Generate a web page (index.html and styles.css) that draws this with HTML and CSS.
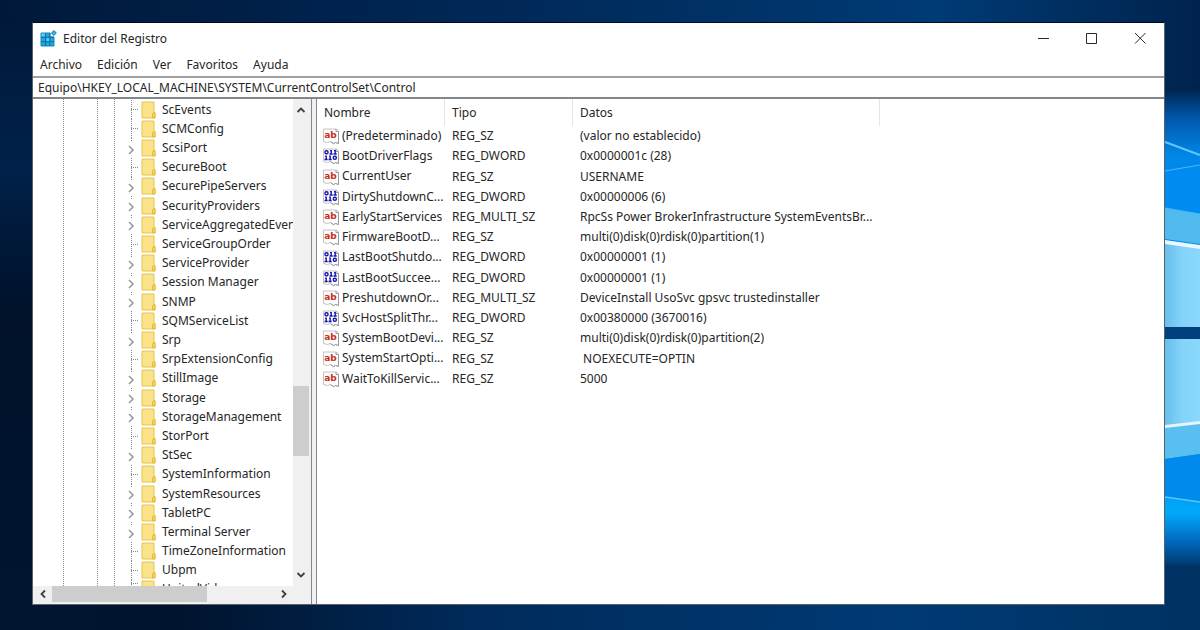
FILE: index.html
```html
<!DOCTYPE html>
<html lang="es">
<head>
<meta charset="utf-8">
<title>Editor del Registro</title>
<link rel="stylesheet" href="styles.css">
</head>
<body>
<svg class="wallpaper" viewBox="0 0 1200 630" preserveAspectRatio="xMaxYMid slice" aria-hidden="true">
  <defs>
    <linearGradient id="sky" x1="0" x2="1" y1="0" y2="0">
      <stop offset="0" stop-color="#00193a"/><stop offset=".2" stop-color="#001f47"/><stop offset=".5" stop-color="#002c5e"/><stop offset=".78" stop-color="#003b75"/><stop offset="1" stop-color="#00234d"/>
    </linearGradient>
    <linearGradient id="floor" x1="0" x2="1" y1="0" y2="0">
      <stop offset="0" stop-color="#00152f"/><stop offset=".15" stop-color="#00142e"/><stop offset=".4" stop-color="#002b5c"/><stop offset=".75" stop-color="#003a74"/><stop offset="1" stop-color="#003263"/>
    </linearGradient>
    <linearGradient id="beam" x1="0" x2="0" y1="0" y2="1">
      <stop offset="0" stop-color="#002652"/><stop offset=".06" stop-color="#0058ac"/><stop offset=".14" stop-color="#0088e8"/><stop offset=".8" stop-color="#008fee"/><stop offset=".89" stop-color="#00a9fa"/><stop offset=".95" stop-color="#0069bf"/><stop offset="1" stop-color="#00396f"/>
    </linearGradient>
    <linearGradient id="pane" x1="0" x2="1" y1="0" y2="0">
      <stop offset="0" stop-color="#66bfeb"/><stop offset=".5" stop-color="#84d3fa"/><stop offset="1" stop-color="#8bd8fc"/>
    </linearGradient>
    <linearGradient id="edge" x1="0" x2="0" y1="0" y2="1">
      <stop offset="0" stop-color="#00193a"/><stop offset=".25" stop-color="#00214a"/><stop offset=".5" stop-color="#001129"/><stop offset="1" stop-color="#00152f"/>
    </linearGradient>
  </defs>
  <rect width="1200" height="630" fill="url(#sky)"/>
  <rect y="560" width="1200" height="70" fill="url(#floor)"/>
  <rect y="22" width="32" height="583" fill="url(#edge)"/>
  <rect x="1165" y="90" width="35" height="475" fill="url(#beam)"/>
  <path d="M1165 169l35-4v50l-35-6z" fill="#008bf0"/>
  <path d="M1165 208l35 6v30l-35-5z" fill="#50b9ed"/>
  <path d="M1165 241l35 5v81h-35z" fill="url(#pane)"/>
  <path d="M1165 142l35 13" stroke="#65c5ff" stroke-width="2"/>
  <path d="M1165 171l35-6M1165 208l35 6" stroke="#49b8f3" stroke-width="1"/>
  <path d="M1165 240l35 5v4l-35-5z" fill="#e9f6ff"/>
  <path d="M1165 327h35v12h-35z" fill="#00407f"/>
  <path d="M1165 339h35v83l-35 5z" fill="url(#pane)"/>
  <path d="M1165 427l35-5v32l-35 5z" fill="#58bff0"/>
  <path d="M1165 459l35-5v48l-35-5z" fill="#008bec"/>
  <path d="M1165 425l35-4v3l-35 4z" fill="#e4f5ff"/>
  <path d="M1165 497l35 5" stroke="#54c8fd" stroke-width="1.500"/>
</svg>

<svg class="symbols" aria-hidden="true">
  <symbol id="folder" viewBox="0 0 15 18">
    <path d="M1 1h12v11h1v5H1z" fill="#fbe38a" stroke="#e6c34f"/>
    <path d="M11.500 17v-4l1-1.500h1.500V17z" fill="#f8d568" stroke="#e5b93c"/>
  </symbol>
  <symbol id="chevron" viewBox="0 0 8 10"><path d="M2 1l4 4-4 4" fill="none" stroke="#9b9b9b" stroke-width="1.600"/></symbol>
  <symbol id="arrow" viewBox="0 0 10 10"><path d="M1.500 7L5 3.500 8.500 7" fill="none" stroke="#404040" stroke-width="1.800"/></symbol>
  <symbol id="sheet" viewBox="0 0 18 17">
    <path d="M1.500 1h13l2 2v12.500l-3-1-2 1-3-2-3 1-4-1z" fill="#fdfdfd" stroke="#c4c4c4"/>
    <path d="M14 1v2.500h2.500M16.500 4v11.500l-3-1-2 1.200-3-2" fill="none" stroke="#999"/>
  </symbol>
  <symbol id="string" viewBox="0 0 18 17">
    <use href="#sheet"/>
    <text x="8.500" y="10" text-anchor="middle" class="glyph-string">ab</text>
  </symbol>
  <symbol id="binary" viewBox="0 0 18 17">
    <use href="#sheet"/>
    <g fill="none" stroke="#1717b0" stroke-width="1.400">
      <rect x="3" y="2.700" width="3" height="3" rx="1.300"/><path d="M8 2.600h1.200v3.400M7.500 6h3.200M12 2.600h1.200v3.400M11.500 6h3.200"/>
      <path d="M3 8.100h1.200v3.400M2.500 11.500h3.200M7 8.100h1.200v3.400M6.500 11.500h3.200"/><rect x="11.300" y="8.200" width="3" height="3" rx="1.300"/>
    </g>
  </symbol>
</svg>

<main class="window">
  <header class="titlebar">
    <svg class="app-icon" viewBox="0 0 17 17" aria-hidden="true">
      <path d="M1 3h9v4h4v9H1z" fill="#20a8dc" stroke="#1386bd"/>
      <path d="M1.500 3.500h4v3h-4zM6.500 8h3v3h-3z" fill="#56cdf3"/>
      <path d="M5.500 3v13M9.800 3v13M1 7.300h13M1 11.700h13" stroke="#0b6fa5"/>
      <path d="M13.700.6l2.600 2.200-2.300 2.600-2.600-2.200z" fill="#35b9e6" stroke="#1480b5"/>
    </svg>
    <h1 class="title">Editor del Registro</h1>
    <div class="controls">
      <button class="control" type="button" aria-label="Minimizar"><svg viewBox="0 0 12 12"><path d="M0 5.500h11"/></svg></button>
      <button class="control" type="button" aria-label="Maximizar"><svg viewBox="0 0 12 12"><path d="M.5.500h10v10h-10z"/></svg></button>
      <button class="control" type="button" aria-label="Cerrar"><svg viewBox="0 0 12 12"><path d="M1 0l10.500 10.500M11.500 0L1 10.500"/></svg></button>
    </div>
  </header>
  <nav class="menubar">
    <button type="button">Archivo</button><button type="button">Edición</button><button type="button">Ver</button><button type="button">Favoritos</button><button type="button">Ayuda</button>
  </nav>
  <input class="address" type="text" aria-label="Ruta de la clave" value="Equipo\HKEY_LOCAL_MACHINE\SYSTEM\CurrentControlSet\Control">
  <div class="panes">
    <section class="tree-pane" aria-label="Claves">
      <ul class="tree">
        <li><span class="branch"></span><svg class="folder"><use href="#folder"/></svg>ScEvents</li>
        <li><span class="branch"></span><svg class="folder"><use href="#folder"/></svg>SCMConfig</li>
        <li><button class="toggle" type="button" aria-label="Expandir ScsiPort"><svg><use href="#chevron"/></svg></button><svg class="folder"><use href="#folder"/></svg>ScsiPort</li>
        <li><span class="branch"></span><svg class="folder"><use href="#folder"/></svg>SecureBoot</li>
        <li><button class="toggle" type="button" aria-label="Expandir SecurePipeServers"><svg><use href="#chevron"/></svg></button><svg class="folder"><use href="#folder"/></svg>SecurePipeServers</li>
        <li><button class="toggle" type="button" aria-label="Expandir SecurityProviders"><svg><use href="#chevron"/></svg></button><svg class="folder"><use href="#folder"/></svg>SecurityProviders</li>
        <li><button class="toggle" type="button" aria-label="Expandir ServiceAggregatedEvents"><svg><use href="#chevron"/></svg></button><svg class="folder"><use href="#folder"/></svg>ServiceAggregatedEvents</li>
        <li><span class="branch"></span><svg class="folder"><use href="#folder"/></svg>ServiceGroupOrder</li>
        <li><button class="toggle" type="button" aria-label="Expandir ServiceProvider"><svg><use href="#chevron"/></svg></button><svg class="folder"><use href="#folder"/></svg>ServiceProvider</li>
        <li><button class="toggle" type="button" aria-label="Expandir Session Manager"><svg><use href="#chevron"/></svg></button><svg class="folder"><use href="#folder"/></svg>Session Manager</li>
        <li><button class="toggle" type="button" aria-label="Expandir SNMP"><svg><use href="#chevron"/></svg></button><svg class="folder"><use href="#folder"/></svg>SNMP</li>
        <li><span class="branch"></span><svg class="folder"><use href="#folder"/></svg>SQMServiceList</li>
        <li><button class="toggle" type="button" aria-label="Expandir Srp"><svg><use href="#chevron"/></svg></button><svg class="folder"><use href="#folder"/></svg>Srp</li>
        <li><span class="branch"></span><svg class="folder"><use href="#folder"/></svg>SrpExtensionConfig</li>
        <li><button class="toggle" type="button" aria-label="Expandir StillImage"><svg><use href="#chevron"/></svg></button><svg class="folder"><use href="#folder"/></svg>StillImage</li>
        <li><button class="toggle" type="button" aria-label="Expandir Storage"><svg><use href="#chevron"/></svg></button><svg class="folder"><use href="#folder"/></svg>Storage</li>
        <li><button class="toggle" type="button" aria-label="Expandir StorageManagement"><svg><use href="#chevron"/></svg></button><svg class="folder"><use href="#folder"/></svg>StorageManagement</li>
        <li><span class="branch"></span><svg class="folder"><use href="#folder"/></svg>StorPort</li>
        <li><button class="toggle" type="button" aria-label="Expandir StSec"><svg><use href="#chevron"/></svg></button><svg class="folder"><use href="#folder"/></svg>StSec</li>
        <li><span class="branch"></span><svg class="folder"><use href="#folder"/></svg>SystemInformation</li>
        <li><button class="toggle" type="button" aria-label="Expandir SystemResources"><svg><use href="#chevron"/></svg></button><svg class="folder"><use href="#folder"/></svg>SystemResources</li>
        <li><button class="toggle" type="button" aria-label="Expandir TabletPC"><svg><use href="#chevron"/></svg></button><svg class="folder"><use href="#folder"/></svg>TabletPC</li>
        <li><button class="toggle" type="button" aria-label="Expandir Terminal Server"><svg><use href="#chevron"/></svg></button><svg class="folder"><use href="#folder"/></svg>Terminal Server</li>
        <li><span class="branch"></span><svg class="folder"><use href="#folder"/></svg>TimeZoneInformation</li>
        <li><span class="branch"></span><svg class="folder"><use href="#folder"/></svg>Ubpm</li>
        <li class="cut"><span class="branch"></span><svg class="folder"><use href="#folder"/></svg>UnitedVideo</li>
      </ul>
      <div class="scroll scroll-y">
        <button type="button" aria-label="Subir"><svg><use href="#arrow"/></svg></button>
        <div class="track"><span class="before"></span><span class="thumb"></span><span class="after"></span></div>
        <button type="button" class="down" aria-label="Bajar"><svg><use href="#arrow"/></svg></button>
      </div>
      <div class="scroll scroll-x">
        <button type="button" class="left" aria-label="Izquierda"><svg><use href="#arrow"/></svg></button>
        <div class="track"><span class="thumb"></span></div>
        <button type="button" class="right" aria-label="Derecha"><svg><use href="#arrow"/></svg></button>
      </div>
    </section>
    <section class="value-pane" aria-label="Valores">
      <table class="values">
        <colgroup><col class="col-name"><col class="col-type"><col class="col-data"><col></colgroup>
        <thead><tr><th>Nombre</th><th>Tipo</th><th>Datos</th><td></td></tr></thead>
        <tbody>
          <tr><td><svg class="kind"><use href="#string"/></svg>(Predeterminado)</td><td>REG_SZ</td><td>(valor no establecido)</td></tr>
          <tr><td><svg class="kind"><use href="#binary"/></svg>BootDriverFlags</td><td>REG_DWORD</td><td>0x0000001c (28)</td></tr>
          <tr><td><svg class="kind"><use href="#string"/></svg>CurrentUser</td><td>REG_SZ</td><td>USERNAME</td></tr>
          <tr><td><svg class="kind"><use href="#binary"/></svg>DirtyShutdownC...</td><td>REG_DWORD</td><td>0x00000006 (6)</td></tr>
          <tr><td><svg class="kind"><use href="#string"/></svg>EarlyStartServices</td><td>REG_MULTI_SZ</td><td>RpcSs Power BrokerInfrastructure SystemEventsBr...</td></tr>
          <tr><td><svg class="kind"><use href="#string"/></svg>FirmwareBootD...</td><td>REG_SZ</td><td>multi(0)disk(0)rdisk(0)partition(1)</td></tr>
          <tr><td><svg class="kind"><use href="#binary"/></svg>LastBootShutdo...</td><td>REG_DWORD</td><td>0x00000001 (1)</td></tr>
          <tr><td><svg class="kind"><use href="#binary"/></svg>LastBootSuccee...</td><td>REG_DWORD</td><td>0x00000001 (1)</td></tr>
          <tr><td><svg class="kind"><use href="#string"/></svg>PreshutdownOr...</td><td>REG_MULTI_SZ</td><td>DeviceInstall UsoSvc gpsvc trustedinstaller</td></tr>
          <tr><td><svg class="kind"><use href="#binary"/></svg>SvcHostSplitThr...</td><td>REG_DWORD</td><td>0x00380000 (3670016)</td></tr>
          <tr><td><svg class="kind"><use href="#string"/></svg>SystemBootDevi...</td><td>REG_SZ</td><td>multi(0)disk(0)rdisk(0)partition(2)</td></tr>
          <tr><td><svg class="kind"><use href="#string"/></svg>SystemStartOpti...</td><td>REG_SZ</td><td>&nbsp;NOEXECUTE=OPTIN</td></tr>
          <tr><td><svg class="kind"><use href="#string"/></svg>WaitToKillServic...</td><td>REG_SZ</td><td>5000</td></tr>
        </tbody>
      </table>
    </section>
  </div>
</main>
</body>
</html>
```
FILE: styles.css
```css
* { box-sizing: border-box; }

body {
  margin: 0;
  height: 100vh;
  padding: 22px 35px 25px 32px;
  background: #00234d;
  font: 12px/18px "Noto Sans", "Open Sans", sans-serif;
  color: #262626;
  overflow: hidden;
}

button {
  margin: 0;
  padding: 0;
  border: 0;
  background: none;
  font: inherit;
  color: inherit;
}

.wallpaper {
  position: absolute;
  inset: 0;
  width: 100%;
  height: 100%;
  z-index: -1;
}

.symbols { position: absolute; width: 0; height: 0; }
.glyph-string { font: bold 9px "DejaVu Sans", sans-serif; fill: #c4301c; }

.window {
  height: 100%;
  display: flex;
  flex-direction: column;
  background: #fff;
  border: 1px solid #5c6269;
  border-top-color: #000a1c;
}

.titlebar {
  display: flex;
  align-items: center;
  height: 31px;
  padding-left: 7px;
}
.app-icon { width: 17px; height: 17px; }
.title { margin: 0 0 0 6px; font-size: 12px; font-weight: 400; }
.controls { display: flex; margin-left: auto; }
.control { width: 48px; height: 30px; display: grid; place-items: center; }
.control svg { width: 12px; height: 12px; fill: none; stroke: #2b2b2b; }

.menubar {
  display: flex;
  align-items: center;
  gap: 15px;
  height: 22px;
  padding-left: 7px;
}

.address {
  height: 23px;
  margin: 0;
  padding: 0 5px;
  border: 0;
  border-top: 2px solid #a0a0a0;
  border-bottom: 2px solid #82878c;
  background: #fff;
  font: inherit;
  color: inherit;
}

.panes { flex: 1; min-height: 0; display: flex; background: #f0f0f0; }

.tree-pane {
  flex: 0 0 279px;
  display: grid;
  grid-template: minmax(0, 1fr) 18px / minmax(0, 1fr) 18px;
  border-right: 1px solid #828790;
}

.tree {
  --dots: repeating-linear-gradient(#8a8a8a 0 1px, transparent 1px 2px);
  margin: 0;
  padding: 1px 0 0;
  list-style: none;
  display: flex;
  flex-direction: column;
  overflow: hidden;
  background:
    var(--dots) 30px 0 / 1px 100% no-repeat,
    var(--dots) 64px 0 / 1px 100% no-repeat,
    var(--dots) 81px 0 / 1px 100% no-repeat,
    #fff;
}
.tree li {
  flex: 1 1 19px;
  min-height: 0;
  display: flex;
  align-items: center;
  padding-left: 94px;
  white-space: nowrap;
}
.tree .cut { flex: 0 0 6px; align-items: flex-start; overflow: hidden; }
.branch {
  flex: none;
  align-self: stretch;
  width: 14px;
  background:
    var(--dots) 4px 0 / 1px 100% no-repeat,
    repeating-linear-gradient(90deg, #8a8a8a 0 1px, transparent 1px 2px) 4px 50% / 8px 1px no-repeat;
}
.toggle {
  flex: none;
  align-self: stretch;
  width: 14px;
  display: flex;
  align-items: center;
  background: var(--dots) 4px 0 / 1px 4px no-repeat;
}
.toggle svg { width: 8px; height: 10px; margin-top: 3px; }
.folder { flex: none; width: 15px; height: 18px; margin-right: 6px; }

.scroll { display: flex; }
.scroll button { flex: none; display: grid; place-items: center; }
.scroll button svg { width: 10px; height: 10px; }
.track { flex: 1; display: flex; }
.thumb { background: #cdcdcd; }

.scroll-y { flex-direction: column; padding-right: 2px; }
.scroll-y button { height: 21px; }
.scroll-y .track { flex-direction: column; }
.scroll-y .before { flex: 265; }
.scroll-y .thumb { flex: 70; }
.scroll-y .after { flex: 109; }
.scroll-x { padding-bottom: 2px; }
.scroll-x button { width: 19px; }
.scroll-x .thumb { width: 70%; }
.down { transform: rotate(180deg); }
.left svg { transform: rotate(-90deg); }
.right svg { transform: rotate(90deg); }

.value-pane {
  flex: 1;
  min-width: 0;
  margin-left: 4px;
  border-left: 1px solid #828790;
  background: #fff;
}
.values {
  width: 100%;
  height: 290px;
  table-layout: fixed;
  border-collapse: separate;
  border-spacing: 0;
}
.col-name, .col-type { width: 128px; }
.col-data { width: 307px; }
.values th, .values td { padding: 0 0 0 7px; white-space: nowrap; text-align: left; font-weight: 400; }
.values thead tr { height: 27px; }
.values th { border-right: 1px solid #e5e5e5; }
.values tbody td:first-child { padding-left: 5px; }
.kind { width: 18px; height: 17px; margin-right: 2px; vertical-align: middle; }
```
